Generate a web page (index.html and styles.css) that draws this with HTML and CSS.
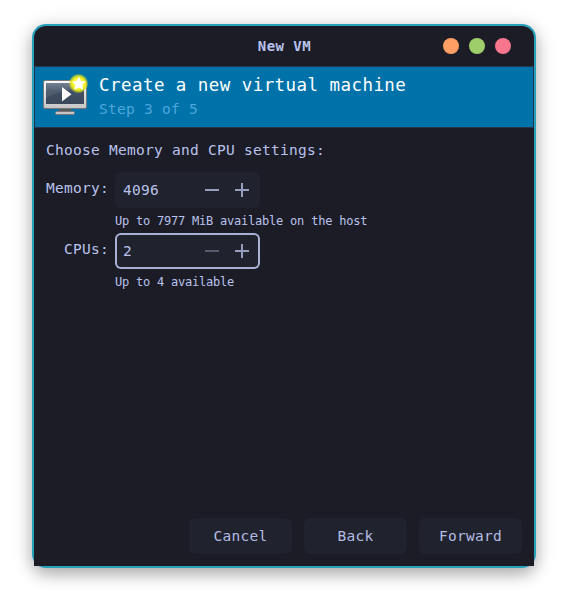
FILE: index.html
```html
<!DOCTYPE html>
<html lang="en">
<head>
<meta charset="utf-8">
<title>New VM</title>
<link rel="stylesheet" href="styles.css">
</head>
<body>
<div class="frame">
  <main class="window">
    <header class="titlebar">
      <h1 class="window-title">New VM</h1>
      <div class="controls">
        <span class="dot orange"></span>
        <span class="dot green"></span>
        <span class="dot red"></span>
      </div>
    </header>
    <section class="banner">
      <svg class="vm-icon" width="48" height="48" viewBox="0 0 48 48">
        <defs>
          <linearGradient id="case" x1="0" y1="0" x2="0" y2="1">
            <stop offset="0" stop-color="#fafafa"/>
            <stop offset="1" stop-color="#c4c4c6"/>
          </linearGradient>
          <linearGradient id="screen" x1="0" y1="0" x2="0" y2="1">
            <stop offset="0" stop-color="#66768a"/>
            <stop offset="0.4" stop-color="#425064"/>
            <stop offset="1" stop-color="#3b485c"/>
          </linearGradient>
          <radialGradient id="glow">
            <stop offset="0" stop-color="#fffbb0"/>
            <stop offset="0.6" stop-color="#f6f420"/>
            <stop offset="0.8" stop-color="#e0e418" stop-opacity="0.75"/>
            <stop offset="1" stop-color="#c0d020" stop-opacity="0"/>
          </radialGradient>
        </defs>
        <path d="M17 34h12v4H17z" fill="#59595b"/>
        <rect x="13.500" y="37.500" width="19" height="3" rx="1" fill="#c4c4c6" stroke="#77777a"/>
        <rect x="1.500" y="6.500" width="43" height="28" rx="1.500" fill="url(#case)" stroke="#77787c"/>
        <rect x="4" y="9" width="38" height="21" fill="url(#screen)"/>
        <path d="M4 9h38v4Q18 16 4 24z" fill="#fff" opacity="0.08"/>
        <path d="M20 13L29.500 20.200L20 27.500z" fill="#fff"/>
        <circle cx="36.500" cy="9.500" r="10" fill="url(#glow)"/>
        <path d="M36.800 2.500l2.200 4.500 4.700.6-3.400 3.200.9 4.900-4.400-2.300-4.400 2.300.9-4.900-3.400-3.200 4.700-.6z" fill="#fff"/>
      </svg>
      <div class="banner-text">
        <h2 class="heading">Create a new virtual machine</h2>
        <p class="step">Step 3 of 5</p>
      </div>
    </section>
    <section class="content">
      <p class="prompt">Choose Memory and CPU settings:</p>
      <div class="form">
        <label class="label" for="memory">Memory:</label>
        <div class="spin" id="memory">
          <span class="value">4096</span>
          <svg class="sign" viewBox="0 0 14 14"><path d="M0 7h14"/></svg>
          <svg class="sign" viewBox="0 0 14 14"><path d="M0 7h14M7 0v14"/></svg>
        </div>
        <p class="hint">Up to 7977 MiB available on the host</p>
        <label class="label" for="cpus">CPUs:</label>
        <div class="spin focused" id="cpus">
          <span class="value">2</span>
          <svg class="sign disabled" viewBox="0 0 14 14"><path d="M0 7h14"/></svg>
          <svg class="sign" viewBox="0 0 14 14"><path d="M0 7h14M7 0v14"/></svg>
        </div>
        <p class="hint">Up to 4 available</p>
      </div>
    </section>
    <footer class="actions">
      <button class="button">Cancel</button>
      <button class="button">Back</button>
      <button class="button">Forward</button>
    </footer>
  </main>
</div>
</body>
</html>
```
FILE: styles.css
```css
* { box-sizing: border-box; }
body {
  margin: 0;
  height: 608px;
  padding: 24px 32px 40px;
  overflow: hidden;
  background: #fff;
  color: #b9c2ec;
  font: 14.5px/20px "DejaVu Sans Mono", monospace;
  letter-spacing: 0.27px;
}
h1, h2, p { margin: 0; font-weight: 400; }
.frame {
  width: 504px;
  height: 544px;
  padding: 2px;
  border-radius: 14px;
  background: #27a1b9;
  box-shadow: 0 6px 16px rgba(0, 0, 0, 0.3), 0 2px 26px rgba(0, 0, 0, 0.08);
}
.window {
  display: flex;
  flex-direction: column;
  height: 540px;
  border-radius: 12px 12px 0 0;
  background: #1c1c27;
}
.titlebar {
  display: grid;
  grid-template-columns: 1fr auto 1fr;
  align-items: center;
  height: 40px;
  padding-right: 23px;
  padding-left: 24px;
}
.window-title {
  grid-column: 2;
  font-size: 14px;
  font-weight: 700;
  letter-spacing: 0.45px;
}
.controls {
  display: flex;
  justify-content: flex-end;
  gap: 10px;
}
.dot { width: 16px; height: 16px; border-radius: 50%; }
.orange { background: #ff9e64; }
.green { background: #9ece6a; }
.red { background: #f7768e; }
.banner {
  display: flex;
  height: 62px;
  padding: 6px 7px 0;
  border: 1px solid #29354a;
  background: #0072aa;
}
.vm-icon { flex: none; margin-top: 1px; }
.banner-text { padding-left: 9px; }
.heading {
  color: #fff;
  font-size: 17.5px;
  line-height: 24px;
  letter-spacing: 0.44px;
}
.step { margin-top: 2px; color: #4da6dc; }
.content { flex: 1; padding: 12px 12px 0; }
.form {
  display: grid;
  grid-template-columns: 63px 145px;
  column-gap: 6px;
  margin-top: 12px;
}
.label { padding-top: 6px; text-align: right; white-space: nowrap; }
.spin {
  display: flex;
  align-items: center;
  height: 36px;
  padding: 0 11px 0 8px;
  border-radius: 6px;
  background: #20222d;
}
.focused { box-shadow: inset 0 0 0 2px #a9b1d6; }
.value { flex: 1; }
.sign {
  width: 14px;
  height: 14px;
  margin-left: 16px;
  fill: none;
  stroke: #969ebe;
  stroke-width: 2;
}
.disabled { opacity: 0.45; }
.hint {
  grid-column: 2;
  height: 25px;
  padding-top: 3px;
  font-size: 12px;
  letter-spacing: -0.22px;
  white-space: nowrap;
}
.actions {
  display: flex;
  justify-content: flex-end;
  gap: 12px;
  padding: 0 12px 12px;
}
.button {
  width: 103px;
  height: 36px;
  padding: 0;
  border: 0;
  border-radius: 6px;
  background: #20222d;
  color: #b4bce4;
  font: inherit;
  letter-spacing: inherit;
}
```
